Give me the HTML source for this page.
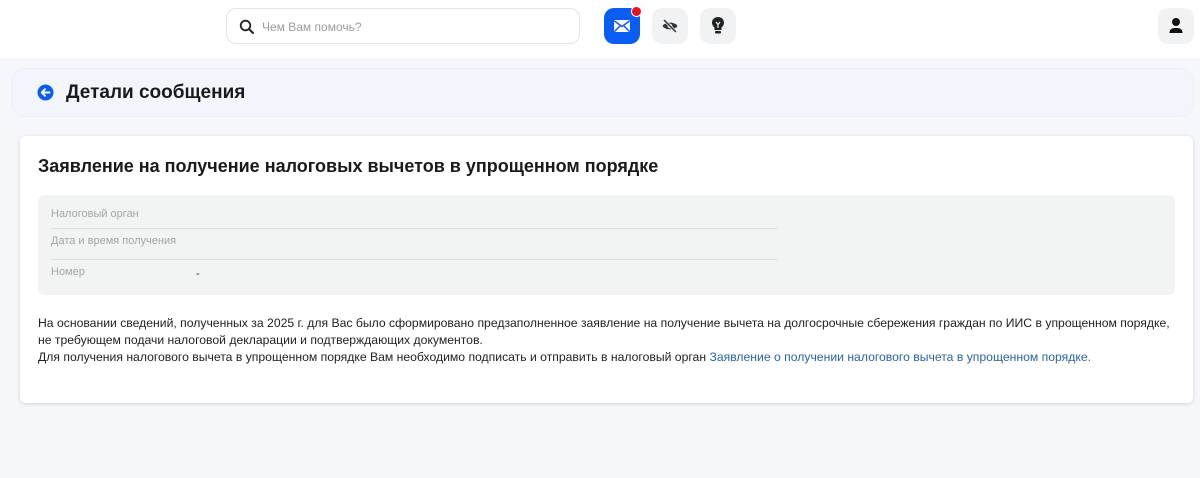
<!DOCTYPE html>
<html><head><meta charset="utf-8"><style>
*{margin:0;padding:0;box-sizing:border-box}
body{width:1200px;height:478px;overflow:hidden;background:#f6f7fb;font-family:"Liberation Sans",sans-serif;color:#1a1a1a;position:relative}
.top{position:absolute;left:0;top:0;width:1200px;height:58px;background:#fff}
.search{position:absolute;left:226px;top:8px;width:354px;height:36px;border:1px solid #e3e4e6;border-radius:10px;background:#fff}
.search span{position:absolute;left:35px;top:11px;font-size:12px;color:#9a9ca0}
.btn{position:absolute;top:8px;width:36px;height:36px;border-radius:10px;background:#f1f2f3}
.hdr{position:absolute;left:11px;top:68px;width:1183px;height:49px;background:#f2f5fc;border-radius:14px;border:1px solid #eceff6}
.hdr h1{position:absolute;left:54px;top:13px;font-size:19px;font-weight:bold}
.card{position:absolute;left:20px;top:136px;width:1173px;height:267px;background:#fff;border-radius:6px;box-shadow:0 1px 4px rgba(0,0,0,.15)}
.card h2{position:absolute;left:18px;top:20px;font-size:18px;font-weight:bold}
.box{position:absolute;left:18px;top:59px;width:1137px;height:100px;background:#f2f3f3;border-radius:6px}
.lbl{position:absolute;left:13px;font-size:11px;color:#a3a5a8}
.line{position:absolute;left:13px;width:727px;height:1px;background:#dcdedf}
.txt{position:absolute;left:18px;top:179px;width:1150px;font-size:12.2px;line-height:17px;color:#222;white-space:nowrap}
.txt a{color:#2a63a8;text-decoration:none}
</style></head><body>
<div class="top">
 <div class="search">
  <svg style="position:absolute;left:12px;top:10px" width="16" height="16" viewBox="0 0 16 16"><circle cx="6.5" cy="6.5" r="4.8" fill="none" stroke="#222" stroke-width="1.8"/><path d="M10 10L14 14" stroke="#222" stroke-width="2" stroke-linecap="round"/></svg>
  <span>Чем Вам помочь?</span>
 </div>
 <div class="btn" style="left:604px;background:#0a5df2">
  <svg style="position:absolute;left:10px;top:11px" width="16" height="14" viewBox="0 0 16 14"><rect x="0" y="1" width="16" height="12" rx="1.5" fill="#fff"/><path d="M0.5 2L8 7.5L15.5 2M0.5 12.5L6 7M15.5 12.5L10 7" stroke="#0a5df2" stroke-width="1.5" fill="none"/></svg>
  <div style="position:absolute;left:27px;top:-2px;width:11px;height:11px;border-radius:50%;background:#e8101a;border:1.5px solid #fff"></div>
 </div>
 <div class="btn" style="left:652px">
  <svg style="position:absolute;left:9px;top:10px" width="18" height="16" viewBox="0 0 18 16"><path d="M1.5 8C4 3.5 14 3.5 16.5 8C14 12.5 4 12.5 1.5 8Z" fill="#333"/><circle cx="9" cy="8" r="2.3" fill="#f1f2f3"/><path d="M3 2L15 14" stroke="#f1f2f3" stroke-width="3"/><path d="M3 2L15 14" stroke="#333" stroke-width="1.5"/></svg>
 </div>
 <div class="btn" style="left:700px">
  <svg style="position:absolute;left:11px;top:8px" width="14" height="20" viewBox="0 0 14 20"><path d="M7 1C3.5 1 1 3.5 1 6.8C1 9.2 2.4 10.5 3.5 11.8V14H10.5V11.8C11.6 10.5 13 9.2 13 6.8C13 3.5 10.5 1 7 1Z" fill="#222"/><rect x="4" y="15" width="6" height="2.5" rx="1" fill="#222"/><path d="M5 6L7 8.5L9 6M7 8.5V12" stroke="#f1f2f3" stroke-width="1.2" fill="none"/></svg>
 </div>
 <div class="btn" style="left:1158px">
  <svg style="position:absolute;left:10px;top:9px" width="16" height="18" viewBox="0 0 16 18"><circle cx="8" cy="5" r="4" fill="#111"/><path d="M1.5 16C1.5 12 4 11 8 11S14.5 12 14.5 16Z" fill="#111"/></svg>
 </div>
</div>
<div class="hdr">
 <svg style="position:absolute;left:25px;top:15px" width="17" height="17" viewBox="0 0 17 17"><circle cx="8.5" cy="8.5" r="8" fill="#0a5df2"/><path d="M12.5 8.5H5M8 5.2L4.7 8.5L8 11.8" stroke="#fff" stroke-width="1.9" fill="none" stroke-linecap="round" stroke-linejoin="round"/></svg>
 <h1>Детали сообщения</h1>
</div>
<div class="card">
 <h2>Заявление на получение налоговых вычетов в упрощенном порядке</h2>
 <div class="box">
  <div class="lbl" style="top:13px">Налоговый орган</div>
  <div class="line" style="top:33px"></div>
  <div class="lbl" style="top:40px">Дата и время получения</div>
  <div class="line" style="top:64px"></div>
  <div class="lbl" style="top:71px">Номер</div>
  <div style="position:absolute;left:158px;top:73px;font-size:11px;color:#333">-</div>
 </div>
 <div class="txt">На основании сведений, полученных за 2025 г. для Вас было сформировано предзаполненное заявление на получение вычета на долгосрочные сбережения граждан по ИИС в упрощенном порядке,<br>не требующем подачи налоговой декларации и подтверждающих документов.<br>Для получения налогового вычета в упрощенном порядке Вам необходимо подписать и отправить в налоговый орган <a>Заявление о получении налогового вычета в упрощенном порядке.</a></div>
</div>
</body></html>
